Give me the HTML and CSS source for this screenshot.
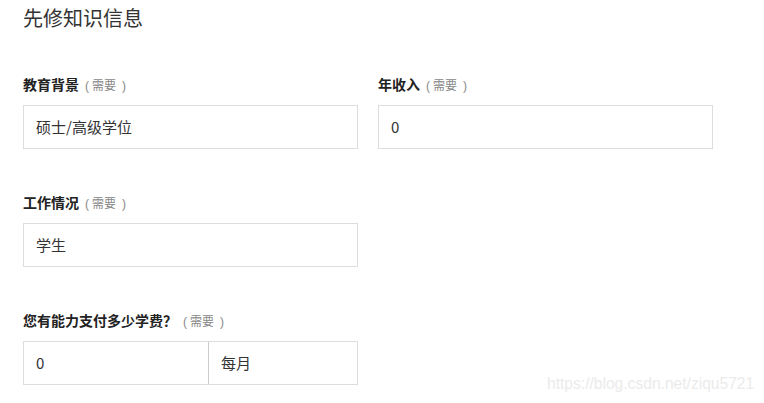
FILE: index.html
```html
<!DOCTYPE html>
<html lang="zh">
<head>
<meta charset="utf-8">
<link rel="stylesheet" href="styles.css">
</head>
<body>
<div class="page">
  <h2 class="title">先修知识信息</h2>
  <div class="grid">
    <div class="group">
      <div class="label"><b>教育背景</b><span class="req"><span class="pl">(</span>需要<span class="pr">)</span></span></div>
      <div class="field">硕士/高级学位</div>
    </div>
    <div class="group">
      <div class="label"><b>年收入</b><span class="req"><span class="pl">(</span>需要<span class="pr">)</span></span></div>
      <div class="field">0</div>
    </div>
  </div>
  <div class="grid">
    <div class="group">
      <div class="label"><b>工作情况</b><span class="req"><span class="pl">(</span>需要<span class="pr">)</span></span></div>
      <div class="field">学生</div>
    </div>
  </div>
  <div class="grid">
    <div class="group">
      <div class="label"><b>您有能力支付多少学费？</b><span class="req"><span class="pl">(</span>需要<span class="pr">)</span></span></div>
      <div class="field split">
        <div class="part first">0</div>
        <div class="part second">每月</div>
      </div>
    </div>
  </div>
</div>
<div class="watermark">https://blog.csdn.net/ziqu5721</div>
</body>
</html>
```

FILE: styles.css
```css
html, body {
  margin: 0;
  padding: 0;
  background: #fff;
}
body {
  width: 764px;
  height: 403px;
  overflow: hidden;
  position: relative;
  font-family: "Noto Sans CJK SC", "Noto Sans", sans-serif;
  color: #333;
}
.page {
  padding: 4px 0 0 23px;
}
.title {
  margin: 0;
  font-size: 20px;
  font-weight: normal;
  line-height: 28px;
  color: #333;
}
.grid {
  display: grid;
  grid-template-columns: 335px 335px;
  column-gap: 20px;
  margin-top: 42px;
}
.grid + .grid {
  margin-top: 43px;
}
.label {
  height: 20px;
  line-height: 20px;
  font-size: 14px;
  margin-bottom: 11px;
  color: #222;
}
.label b {
  font-weight: bold;
}
.req {
  font-size: 12px;
  color: #888;
  margin-left: 6px;
}
.pl {
  font-family: "Liberation Sans", sans-serif;
  margin-right: 3px;
}
.pr {
  font-family: "Liberation Sans", sans-serif;
  margin-left: 6px;
}
.field {
  box-sizing: border-box;
  height: 44px;
  border: 1px solid #ddd;
  padding: 0 12px;
  font-size: 15px;
  line-height: 42px;
  color: #333;
}
.split {
  display: flex;
  padding: 0;
}
.part.first {
  width: 184px;
  padding-left: 12px;
  box-sizing: border-box;
}
.part.second {
  flex: 1;
  border-left: 1px solid #ccc;
  padding-left: 12px;
}
.watermark {
  position: absolute;
  left: 547px;
  top: 374px;
  font-family: "Liberation Sans", Arial, sans-serif;
  font-size: 15.6px;
  line-height: 20px;
  color: #ebebeb;
  white-space: nowrap;
}
```
